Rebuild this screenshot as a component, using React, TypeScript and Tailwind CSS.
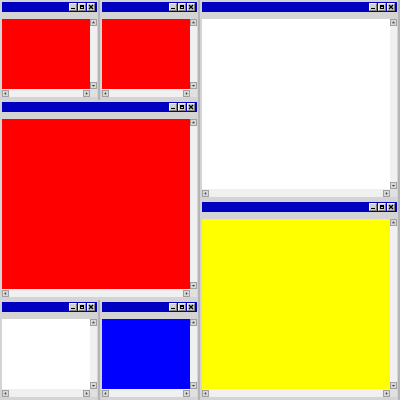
import { ReactNode } from "react";

function TitleButton({ children }: { children: ReactNode }) {
  return (
    <div className="w-[8px] h-[8px] bg-[#d0d0d0] border border-[#808080] border-t-[#f0f0f0] border-l-[#f0f0f0] flex items-center justify-center">
      {children}
    </div>
  );
}

function Arrow({ dir }: { dir: "up" | "down" | "left" | "right" }) {
  const pts = {
    up: "1.5,5 4,2 6.5,5",
    down: "1.5,3 4,6 6.5,3",
    left: "5,1.5 2,4 5,6.5",
    right: "3,1.5 6,4 3,6.5",
  }[dir];
  return (
    <div className="w-[7px] h-[7px] bg-[#d8d8d8] border border-[#a0a0a0]">
      <svg width="5" height="5" viewBox="0 0 8 8">
        <polygon points={pts} fill="#404040" />
      </svg>
    </div>
  );
}

function Win({ color }: { color: string }) {
  return (
    <div className="flex flex-col h-full bg-[#d4d4d4] pt-[2px] pl-[2px] pr-[1px] pb-[3px] border-r-2 border-[#b4b4b4]">
      <div className="h-[10px] bg-[#0000c0] flex items-center justify-end gap-[1px] pr-[2px]">
        <TitleButton>
          <div className="w-[4px] h-[1px] bg-black mt-[3px]" />
        </TitleButton>
        <TitleButton>
          <div className="w-[4px] h-[4px] border border-black border-t-2" />
        </TitleButton>
        <TitleButton>
          <svg width="6" height="6" viewBox="0 0 6 6">
            <path d="M1 1 L5 5 M5 1 L1 5" stroke="black" strokeWidth="1.4" />
          </svg>
        </TitleButton>
      </div>
      <div className="h-[7px]" />
      <div className="flex-1 flex min-h-0">
        <div className={`flex-1 ${color}`} />
        <div className="w-[7px] bg-[#f0f0f0] flex flex-col justify-between">
          <Arrow dir="up" />
          <Arrow dir="down" />
        </div>
      </div>
      <div className="h-[8px] flex">
        <div className="flex-1 bg-[#f0f0f0] flex justify-between items-center">
          <Arrow dir="left" />
          <Arrow dir="right" />
        </div>
        <div className="w-[7px] bg-[#e0e0e0]" />
      </div>
    </div>
  );
}

export default function App() {
  return (
    <div className="w-[400px] h-[400px] bg-[#d4d4d4] flex overflow-hidden">
      <div className="w-[200px] h-full flex flex-col">
        <div className="h-[100px] flex">
          <div className="w-[100px] h-full"><Win color="bg-[#ff0000]" /></div>
          <div className="w-[100px] h-full"><Win color="bg-[#ff0000]" /></div>
        </div>
        <div className="h-[200px]"><Win color="bg-[#ff0000]" /></div>
        <div className="h-[100px] flex">
          <div className="w-[100px] h-full"><Win color="bg-white" /></div>
          <div className="w-[100px] h-full"><Win color="bg-[#0000ff]" /></div>
        </div>
      </div>
      <div className="w-[200px] h-full flex flex-col">
        <div className="h-[200px]"><Win color="bg-white" /></div>
        <div className="h-[200px]"><Win color="bg-[#ffff00]" /></div>
      </div>
    </div>
  );
}
